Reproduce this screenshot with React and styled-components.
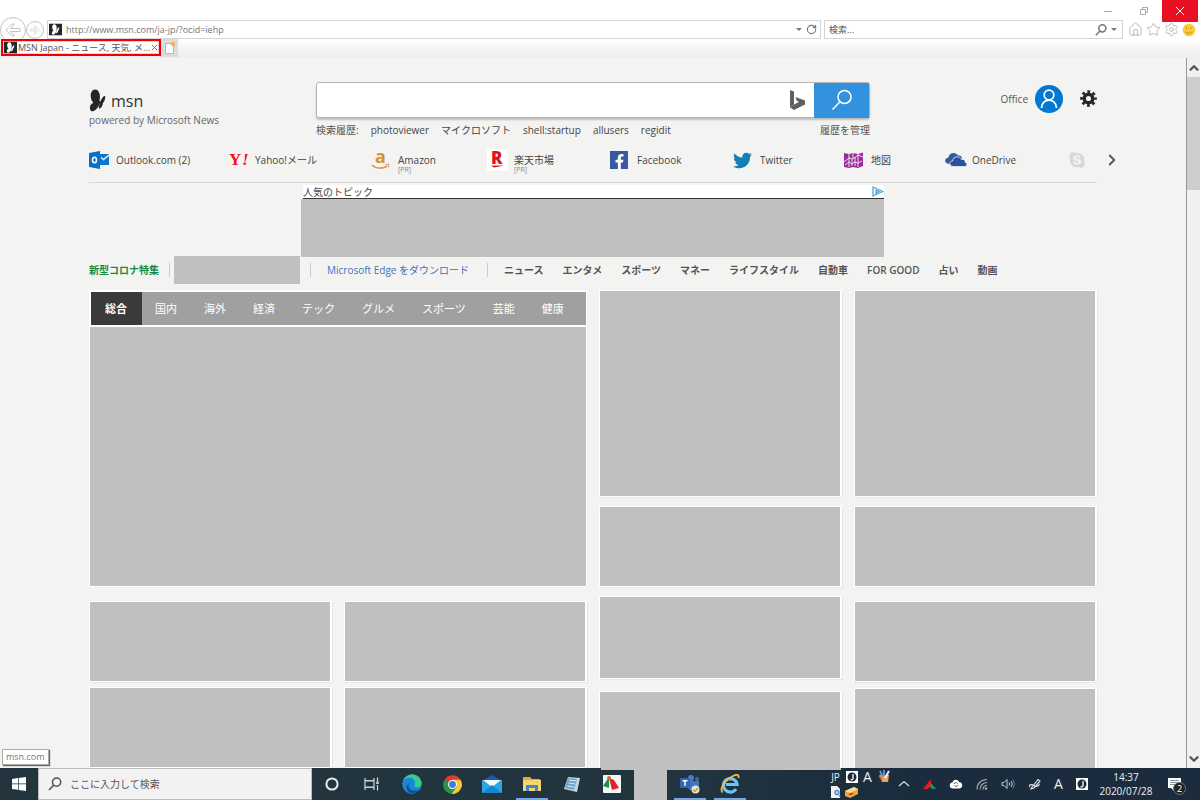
import React from "react"
import styled, { createGlobalStyle } from "styled-components"
import { FaFacebookF, FaTwitter, FaSkype } from "react-icons/fa"
import { Home, Star, Settings, RotateCw, ChevronRight, ChevronUp, ChevronDown } from "lucide-react"

const GRAY = "#c0c0c0"

const QUICK_LINKS = [
  { title: "Outlook.com", extra: "(2)", icon: <OutlookIcon /> },
  { title: "Yahoo!メール", icon: <YahooIcon /> },
  { title: "Amazon", pr: true, icon: <AmazonIcon /> },
  { title: "楽天市場", pr: true, icon: <RakutenIcon /> },
  { title: "Facebook", icon: <FacebookIcon /> },
  { title: "Twitter", icon: <FaTwitter size={19} color="#1180b4" /> },
  { title: "地図", icon: <MapIcon /> },
  { title: "OneDrive", icon: <OneDriveIcon /> },
]

const TOPICS = ["ニュース", "エンタメ", "スポーツ", "マネー", "ライフスタイル", "自動車", "FOR GOOD", "占い", "動画"]

const NEWS_TABS = ["総合", "国内", "海外", "経済", "テック", "グルメ", "スポーツ", "芸能", "健康"]

const HISTORY = ["photoviewer", "マイクロソフト", "shell:startup", "allusers", "regidit"]

export default function App() {
  return (
    <Screen>
      <GlobalStyle />
      <BrowserChrome />
      <Viewport>
        <Page>
          <Content>
            <PageHeader />
            <QuickLinks />
            <Ad>
              <AdTitle>
                人気のトピック
                <AdChoicesIcon />
              </AdTitle>
              <AdBody />
            </Ad>
            <TopicNav />
            <Board />
          </Content>
        </Page>
        <ScrollBar>
          <ScrollButton aria-label="Scroll up">
            <ChevronUp size={14} strokeWidth={4} />
          </ScrollButton>
          <ScrollThumb />
          <ScrollButton aria-label="Scroll down">
            <ChevronDown size={14} strokeWidth={4} />
          </ScrollButton>
        </ScrollBar>
        <StatusTip>msn.com</StatusTip>
      </Viewport>
      <Taskbar />
    </Screen>
  )
}

function BrowserChrome() {
  return (
    <Chrome>
      <TitleBar>
        <WindowButton aria-label="Minimize">
          <svg width="10" height="10" viewBox="0 0 10 10" stroke="#aaa">
            <path d="M1 5.5h8" />
          </svg>
        </WindowButton>
        <WindowButton aria-label="Restore">
          <svg width="10" height="10" viewBox="0 0 10 10" fill="none" stroke="#aaa">
            <path d="M1.5 3.5h5v5h-5zM3.5 3.5v-2h5v5h-2" />
          </svg>
        </WindowButton>
        <WindowButton $close aria-label="Close">
          <svg width="10" height="10" viewBox="0 0 10 10" stroke="#fff">
            <path d="M1 1l8 8M9 1l-8 8" />
          </svg>
        </WindowButton>
      </TitleBar>
      <AddressRow>
        <NavButton $size={26} aria-label="Back">
          <ArrowIcon size={16} />
        </NavButton>
        <NavButton $size={18} aria-label="Forward">
          <ArrowIcon size={10} flip />
        </NavButton>
        <AddressBox>
          <MsnBadge />
          <ChromeInput aria-label="Address" defaultValue="http://www.msn.com/ja-jp/?ocid=iehp" />
          <Caret />
          <IconButton aria-label="Refresh">
            <RotateCw size={11} strokeWidth={2.5} />
          </IconButton>
        </AddressBox>
        <SearchBox>
          <ChromeInput aria-label="Search" placeholder="検索..." />
          <IconButton aria-label="Search the web">
            <GlassIcon size={12} width={1.5} />
          </IconButton>
          <Caret />
        </SearchBox>
        <ChromeTools>
          <Home size={15} strokeWidth={1.5} />
          <Star size={15} strokeWidth={1.5} />
          <Settings size={15} strokeWidth={1.5} />
          <svg width="14" height="14" viewBox="0 0 14 14">
            <circle cx="7" cy="7" r="6.3" fill="#fccb35" />
            <path d="M4.5 4.5v1.5M9 4.5v1.5M3.5 8.5c1.5 2.5 5 2.5 6.5 0" fill="none" stroke="#a9812c" />
          </svg>
        </ChromeTools>
      </AddressRow>
      <TabRow>
        <BrowserTab>
          <MsnBadge />
          <TabTitle>MSN Japan - ニュース, 天気, メ...</TabTitle>
          <IconButton aria-label="Close tab">
            <svg width="7" height="7" viewBox="0 0 7 7" stroke="#777">
              <path d="M1 1l5 5M6 1l-5 5" />
            </svg>
          </IconButton>
        </BrowserTab>
        <NewTab aria-label="New tab">
          <svg width="12" height="14" viewBox="0 0 12 14">
            <path d="M1.5 2.5h8v10h-8z" fill="#fff" stroke="#b5b5b5" />
            <circle cx="9" cy="3" r="2.2" fill="#f3ad4a" />
          </svg>
        </NewTab>
      </TabRow>
    </Chrome>
  )
}

function PageHeader() {
  return (
    <Header>
      <Brand href="#">
        <BrandRow>
          <ButterflyIcon />
          <BrandName>msn</BrandName>
        </BrandRow>
        <BrandNote>powered by Microsoft News</BrandNote>
      </Brand>
      <SearchArea>
        <BingForm>
          <BingInput aria-label="Bing search" />
          <BingIcon />
          <BingButton type="button" aria-label="Search">
            <GlassIcon size={22} width={1.5} />
          </BingButton>
        </BingForm>
        <HistoryRow>
          <span>検索履歴:</span>
          {HISTORY.map((item) => (
            <HistoryLink href="#" key={item}>
              {item}
            </HistoryLink>
          ))}
          <ManageLink href="#">履歴を管理</ManageLink>
        </HistoryRow>
      </SearchArea>
      <Account>
        <span>Office</span>
        <Avatar aria-label="Account">
          <svg width="28" height="28" viewBox="0 0 28 28" fill="none" stroke="#fff" strokeWidth="1.8">
            <circle cx="14" cy="10" r="4.8" />
            <path d="M6.5 23c0-10.5 15-10.5 15 0" />
          </svg>
        </Avatar>
        <IconButton aria-label="Page settings">
          <GearIcon />
        </IconButton>
      </Account>
    </Header>
  )
}

function QuickLinks() {
  return (
    <LinkBar>
      {QUICK_LINKS.map((link) => (
        <QuickLink href="#" key={link.title}>
          <LinkIcon>{link.icon}</LinkIcon>
          <LinkText>
            {link.title} {link.extra}
            {link.pr && <PrNote>[PR]</PrNote>}
          </LinkText>
        </QuickLink>
      ))}
      <FadedLink href="#" aria-label="Skype">
        <FaSkype size={18} />
      </FadedLink>
      <NextButton aria-label="Next links">
        <ChevronRight size={18} strokeWidth={2.5} />
      </NextButton>
    </LinkBar>
  )
}

function TopicNav() {
  return (
    <Topics>
      <Special href="#">新型コロナ特集</Special>
      <Divider />
      <TopicBlock />
      <Divider />
      <EdgeLink href="#">Microsoft Edge をダウンロード</EdgeLink>
      <Divider />
      <TopicList>
        {TOPICS.map((topic) => (
          <TopicLink href="#" key={topic}>
            {topic}
          </TopicLink>
        ))}
      </TopicList>
    </Topics>
  )
}

function Board() {
  return (
    <Columns>
      <MainColumn>
        <TabCard>
          <NewsTabs>
            {NEWS_TABS.map((tab, i) => (
              <NewsTab key={tab} $active={i === 0}>
                {tab}
              </NewsTab>
            ))}
          </NewsTabs>
          <TabBody />
        </TabCard>
        <CardGrid>
          <Card $height={81} />
          <Card $height={81} />
          <Card $height={81} />
          <Card $height={81} />
        </CardGrid>
      </MainColumn>
      <SideColumn>
        <Card $height={207} />
        <Card $height={81} />
        <CardPair $gap={12} $top={0}>
          <Card $height={83} />
          <Card $height={81} />
        </CardPair>
      </SideColumn>
      <SideColumn>
        <Card $height={207} />
        <Card $height={81} />
        <CardPair $gap={6} $top={5}>
          <Card $height={81} />
          <Card $height={81} />
        </CardPair>
      </SideColumn>
    </Columns>
  )
}

function Taskbar() {
  return (
    <Bar>
      <StartButton aria-label="Start">
        <svg width="14" height="14" viewBox="0 0 14 14" fill="#fff">
          <path d="M0 2l6-.9v5.5H0zM6.7 1L14 0v6.6H6.7zM0 7.3h6v5.5l-6-.9zM6.7 7.3H14V14l-7.3-1z" />
        </svg>
      </StartButton>
      <TaskSearch>
        <GlassIcon size={14} width={1.5} />
        <TaskInput aria-label="Windows search" placeholder="ここに入力して検索" />
      </TaskSearch>
      <AppButton aria-label="Cortana">
        <svg width="20" height="20" viewBox="0 0 20 20" fill="none" stroke="#e9e9e9" strokeWidth="2">
          <circle cx="10" cy="10" r="5.6" />
        </svg>
      </AppButton>
      <AppButton aria-label="Task view">
        <svg width="20" height="20" viewBox="0 0 20 20" fill="none" stroke="#cfd4d6" strokeWidth="1.2">
          <path d="M3 4v2.500h9V4M3 16v-2.500h9V16M3 7v6h9V7zM15.500 3.500v4M15.500 11v5.500" />
          <path d="M15.500 7.500v2.500" strokeWidth="2.5" />
        </svg>
      </AppButton>
      <AppButton aria-label="Edge">
        <EdgeIcon />
      </AppButton>
      <AppButton aria-label="Chrome">
        <ChromeIcon />
      </AppButton>
      <AppButton aria-label="Mail">
        <MailIcon />
      </AppButton>
      <AppButton $open aria-label="Explorer">
        <FolderIcon />
      </AppButton>
      <AppButton aria-label="Notepad">
        <NotepadIcon />
      </AppButton>
      <AppButton aria-label="Pinwheel">
        <PinwheelIcon />
      </AppButton>
      <Mask />
      <AppButton $open aria-label="Teams">
        <TeamsIcon />
      </AppButton>
      <AppButton $open aria-label="Internet Explorer">
        <ExplorerIcon />
      </AppButton>
      <Tray>
        <LanguageBar>
          <span>JP</span>
          <ImeIcon />
          <BigLetter>A</BigLetter>
          <PaletteIcon />
          <DocIcon />
          <ToolboxIcon />
        </LanguageBar>
        <TrayIcons>
          <svg width="12" height="12" viewBox="0 0 12 12" fill="none" stroke="#ddd" strokeWidth="1.3">
            <path d="M1 8l5-4.500L11 8" />
          </svg>
          <svg width="13" height="12" viewBox="0 0 13 12">
            <path d="M0 11L8 1v7l-3 3z" fill="#f1141d" />
            <path d="M8 5l5 6H9L7 8.500z" fill="#1c9950" />
          </svg>
          <svg width="14" height="12" viewBox="0 0 14 12">
            <path d="M4 10.500a3 3 0 0 1-.5-6C4 1.500 8.500.5 10 4c4 0 4.500 6 .5 6.500z" fill="#fff" />
            <path d="M5 6a2 2 0 0 1 3.500-.5M9 7a2 2 0 0 1-3.500.5" fill="none" stroke="#555" />
          </svg>
          <svg width="12" height="12" viewBox="0 0 12 12" fill="none" stroke="#aaa" strokeWidth="1.1">
            <path d="M1 11.500C1 5.500 5 1.500 11 1.500M4 11.500c0-4 3-7 7-7M7 11.500c0-2.500 1.500-4 4-4" />
            <circle cx="10" cy="10.5" r=".8" fill="#fff" />
          </svg>
          <svg width="14" height="12" viewBox="0 0 14 12" fill="none" stroke="#ccc">
            <path d="M1 4.500h2l3-3v9l-3-3H1zM8 4.500q1.500 1.500 0 3M10 3q2.500 3 0 6" />
            <path d="M12 1.500q3 4.500 0 9" stroke="#777" />
          </svg>
          <svg width="13" height="13" viewBox="0 0 13 13" fill="none" stroke="#ddd" strokeWidth="1.2">
            <path d="M3 10.500L10 1.500l2 1.500-6 7-3 1zM2 9c-2-3 3-3 5-1 2 1 5-1 4-2" />
          </svg>
          <BigLetter>A</BigLetter>
          <ImeIcon />
        </TrayIcons>
        <Clock>
          <span>14:37</span>
          <span>2020/07/28</span>
        </Clock>
        <NoticeButton aria-label="Notifications">
          <svg width="15" height="15" viewBox="0 0 15 15">
            <path d="M1 1h13v10H7v3l-3-3H1z" fill="#fff" />
            <path d="M3 3.500h9M3 5.500h9M3 7.500h6" stroke="#8a949d" />
          </svg>
          <NoticeCount>2</NoticeCount>
        </NoticeButton>
      </Tray>
    </Bar>
  )
}

/* Icons */

function ArrowIcon({ size, flip }) {
  return (
    <svg width={size} height={size} viewBox="0 0 16 16" fill="none" stroke="#c4c4c4" strokeLinejoin="round">
      <path
        d={flip ? "M15 8L9 2H6.500l4 4.500H1v3h9.500l-4 4.500H9z" : "M1 8l6-6h2.500l-4 4.500H15v3H5.500l4 4.500H7z"}
      />
    </svg>
  )
}

function GlassIcon({ size, width }) {
  return (
    <svg
      width={size}
      height={size}
      viewBox="0 0 22 22"
      fill="none"
      stroke="currentColor"
      strokeWidth={(width * 22) / size}
    >
      <circle cx="13.5" cy="8" r="6.5" />
      <path d="M9 12.800L1.500 20.500" />
    </svg>
  )
}

function ButterflyShape({ fill }) {
  return (
    <g fill={fill}>
      <path d="M6 0c4-.5 6 6 4.500 11 1 1.500.5 3-.5 4.500C8.500 19 5.500 22 3 21.800.5 21.500.5 17 2 15c1-1.300 2.500-1.500 2.500-1.500C1 10.500 0 .5 6 0z" />
      <path d="M16 6.500c.8.500 0 3-.5 4.500-.3 1.200-1 2-1.700 2.500.3 2-1.800 5.500-3.300 5.500-1.500-.2-.2-3.500 0-4.500C11.500 11 14 6 16 6.500z" />
    </g>
  )
}

function ButterflyIcon() {
  return (
    <svg width="17" height="23" viewBox="0 0 17 22">
      <ButterflyShape fill="#262626" />
    </svg>
  )
}

function MsnBadge() {
  return (
    <svg width="13" height="13" viewBox="-5 -1 27 24">
      <rect x="-5" y="-1" width="27" height="24" fill="#262626" />
      <ButterflyShape fill="#fff" />
    </svg>
  )
}

function BingIcon() {
  return (
    <svg width="15" height="20" viewBox="0 0 15 20" fill="#606060">
      <path d="M0 0l4 1.500v13l-4 3z" />
      <path d="M0 17.500l4-3 5-2.500-2.300-1.200L5.500 7 15 10.500v4L4 20z" />
    </svg>
  )
}

function GearIcon() {
  return (
    <svg width="17" height="17" viewBox="0 0 18 18" fill="none" stroke="#262626">
      <circle cx="9" cy="9" r="4.5" strokeWidth="3.6" />
      <circle cx="9" cy="9" r="7.3" strokeWidth="3" strokeDasharray="2.9 2.833" strokeDashoffset="1.45" />
    </svg>
  )
}

function OutlookIcon() {
  return (
    <svg width="20" height="18" viewBox="0 0 20 18">
      <path d="M11 3h9v11h-9z" fill="#0a76cf" />
      <path d="M12 6.500l2.500 2L20 4" fill="none" stroke="#f3f3f2" strokeWidth="1.4" />
      <path d="M0 2l11-2v18L0 16z" fill="#0a70c8" />
      <ellipse cx="5.5" cy="9" rx="2" ry="2.8" fill="none" stroke="#fff" strokeWidth="1.5" />
    </svg>
  )
}

function YahooIcon() {
  return (
    <svg width="21" height="16" viewBox="0 0 21 16">
      <text x="1" y="13" fontFamily="Liberation Serif, serif" fontWeight="700" fontSize="17" fill="#f01020">
        Y
      </text>
      <text
        x="14"
        y="13"
        fontFamily="Liberation Serif, serif"
        fontWeight="700"
        fontStyle="italic"
        fontSize="17"
        fill="#f01020"
      >
        !
      </text>
    </svg>
  )
}

function AmazonIcon() {
  return (
    <svg width="19" height="20" viewBox="0 0 19 20">
      <text x="4" y="13" fontFamily="Open Sans, sans-serif" fontWeight="700" fontSize="18" fill="#d9922b">
        a
      </text>
      <path d="M1 15c4 4 11 4 15 1" fill="none" stroke="#e8935a" strokeWidth="1.6" />
      <path d="M14.500 14.500l3.500-.5-1 3.500" fill="none" stroke="#e8935a" />
    </svg>
  )
}

function RakutenIcon() {
  return (
    <svg width="21" height="22" viewBox="0 0 21 22">
      <rect width="21" height="22" fill="#fff" />
      <text x="4" y="15" fontFamily="Open Sans, sans-serif" fontWeight="800" fontSize="17" fill="#e5101e">
        R
      </text>
      <path d="M4 16.500h13L7 18.500z" fill="#e5101e" />
    </svg>
  )
}

function FacebookIcon() {
  return (
    <FacebookBox>
      <FaFacebookF size={15} />
    </FacebookBox>
  )
}

function MapIcon() {
  return (
    <svg width="19" height="16" viewBox="0 0 19 16">
      <path d="M0 1l5 1 4-1 5 1 5-1.500V14l-5 2-5-1-4 1-5-1z" fill="#992a9c" />
      <path
        d="M5 2v13M14 2v13M0 10l5-4 4 1 5-4 5 2M1 13l4-3 3 2 2-2 4 1 4-2M9 1v5M8 7v7M11 5v9"
        fill="none"
        stroke="#f3f3f2"
        strokeWidth=".9"
      />
    </svg>
  )
}

function OneDriveIcon() {
  return (
    <svg width="22" height="14" viewBox="0 0 22 14">
      <path d="M4 11c-5-.5-5-6-.5-6.500C4-1 11-1.500 13 2.500 17 2 17 5 17 7z" fill="#3557a4" />
      <path
        d="M8 13.500c-4.500-.5-4-5.500-.5-5.500.5-5 7.500-5.500 9-1.500 3-.5 4 1 3.500 2.500 3 1 2 4.500 0 4.500z"
        fill="#2a4f9f"
        stroke="#f3f3f2"
        strokeWidth=".8"
      />
    </svg>
  )
}

function AdChoicesIcon() {
  return (
    <svg width="12" height="11" viewBox="0 0 12 11" fill="none" stroke="#4eaadb" strokeWidth="1.3">
      <path d="M1 1l9.500 4.500L1 10z" />
      <path d="M4 8V4.200l3 1.300-3 1.500" />
    </svg>
  )
}

function EdgeIcon() {
  return (
    <svg width="20" height="20" viewBox="0 0 20 20">
      <circle cx="10" cy="10" r="9.7" fill="#168bd0" />
      <path d="M1 7C4-1.500 17-2 19.500 8c.8 4-2 6-6 5-1.500-.5-1-1.500-.5-2.500C14 7 8 2.500 1 7z" fill="#3ccb8f" />
      <path d="M1 7c3.500-5 11-4 12 1-4-2.500-9 1-7 6 1 3 3 5 6 5.500C5 21-1 15 1 7z" fill="#1d86d6" />
      <path d="M7.500 9c-3 4 1.500 10 10 6.500-3 4-7 4.500-9.500 3.500-4-2-5-8-.5-10z" fill="#194f9c" />
    </svg>
  )
}

function ChromeIcon() {
  return (
    <svg width="19" height="19" viewBox="0 0 20 20">
      <path d="M10 10L1.500 5A10 10 0 0 1 18.500 5z" fill="#e23c32" />
      <path d="M10 10L1.500 5a10 10 0 0 0 7.500 15l5-8z" fill="#27964c" />
      <path d="M10 10l4.500 2L9 20A10 10 0 0 0 18.500 5H10z" fill="#fbc935" />
      <circle cx="10" cy="10" r="4.7" fill="#fff" />
      <circle cx="10" cy="10" r="3.6" fill="#3b7ded" />
    </svg>
  )
}

function MailIcon() {
  return (
    <svg width="20" height="18" viewBox="0 0 20 18">
      <path d="M0 6l10-6 10 6z" fill="#155fa8" />
      <path d="M0 5h20v13H0z" fill="#2ba8e4" />
      <path d="M1 5h18l-9 7z" fill="#f4f8fb" />
      <path d="M0 18l10-8 10 8z" fill="#1585cf" />
    </svg>
  )
}

function FolderIcon() {
  return (
    <svg width="18" height="16" viewBox="0 0 18 16">
      <path d="M0 1h7l2 2h8v12H0z" fill="#e9a83a" />
      <path d="M0 4h18v11H0z" fill="#fbd36b" />
      <path d="M3 15V9h12v6h-3v-3H6v3z" fill="#3b87d8" />
    </svg>
  )
}

function NotepadIcon() {
  return (
    <svg width="18" height="18" viewBox="0 0 18 18">
      <path d="M5 2l12 1-3 14-13-3z" fill="#cdd6dc" />
      <path d="M5 3l9 1-3 11-9-2z" fill="#6da3cd" />
      <path d="M6 5l7 1M5.500 8l6.500 1M4.500 11l6.500 1" stroke="#dce9f2" />
    </svg>
  )
}

function PinwheelIcon() {
  return (
    <svg width="18" height="18" viewBox="0 0 18 18">
      <rect width="18" height="18" rx="1" fill="#f5f5f5" />
      <path d="M6 2L0 11l6 2z" fill="#16944a" />
      <path d="M6 3l5 2 5 8-7 2z" fill="#e3222c" />
      <circle cx="6" cy="3" r="2" fill="#d9672c" />
    </svg>
  )
}

function TeamsIcon() {
  return (
    <svg width="20" height="20" viewBox="0 0 20 20">
      <circle cx="11" cy="4" r="3" fill="#4a7bc8" />
      <circle cx="17" cy="5" r="2" fill="#3d68b4" />
      <path d="M8 7h11v7c-1 4-9 4-11 0z" fill="#4473c2" />
      <rect y="4" width="10" height="10" rx="1" fill="#3563b0" />
      <path d="M2.500 6.700h5M5 6.700v5" stroke="#fff" strokeWidth="1.5" />
      <circle cx="15.5" cy="15.5" r="4" fill="#e8e4d0" />
      <path d="M13 15.500l2 2 3-3.500" fill="none" stroke="#c89a35" strokeWidth="1.3" />
    </svg>
  )
}

function ExplorerIcon() {
  return (
    <svg width="20" height="20" viewBox="0 0 20 20" fill="none">
      <path d="M16 15a6.800 6.800 0 1 1 1-4.500H6" stroke="#6cc6f4" strokeWidth="3.2" />
      <path d="M2.500 18.500C-1 15 6 5 13 2c4-2 6-1.500 5.500 2" stroke="#f5bd3c" strokeWidth="1.8" />
    </svg>
  )
}

function ImeIcon() {
  return (
    <svg width="12" height="12" viewBox="0 0 12 12">
      <rect width="12" height="12" fill="#fff" />
      <circle cx="6" cy="6" r="4.5" fill="#1b2b36" />
      <path d="M7 3v4.500c0 1-1 1.500-2.500 1.500" fill="none" stroke="#fff" strokeWidth="1.3" />
    </svg>
  )
}

function PaletteIcon() {
  return (
    <svg width="12" height="13" viewBox="0 0 12 13">
      <path d="M1 5h10l-1 7H4z" fill="#e9a55c" />
      <path d="M2 1l3 6M6 0v6" stroke="#5f9ad4" strokeWidth="1.8" />
      <path d="M11 1L7 8" stroke="#f0f0f0" strokeWidth="2" />
      <path d="M1 6l3 4" stroke="#d6503e" strokeWidth="1.5" />
    </svg>
  )
}

function DocIcon() {
  return (
    <svg width="10" height="12" viewBox="0 0 10 12">
      <path d="M0 0h6l3 3v9H0z" fill="#f2f2f2" />
      <circle cx="6" cy="6.5" r="2.3" fill="#9cc7ee" stroke="#3a78b5" />
      <path d="M7.500 8.500l2 2.500" stroke="#3a78b5" />
    </svg>
  )
}

function ToolboxIcon() {
  return (
    <svg width="13" height="12" viewBox="0 0 13 12">
      <path d="M0 5l9-4 4 2v5l-8 4-5-2z" fill="#eaa93e" />
      <path d="M0 5l9-4 4 2-8 4z" fill="#fbdc94" />
      <path d="M4 8.500l4-1" stroke="#a33b1e" strokeWidth="1.5" />
    </svg>
  )
}

/* Styles */

const GlobalStyle = createGlobalStyle`
  * {
    box-sizing: border-box;
  }

  body {
    margin: 0;
    color: #555;
    font-family: "Open Sans", "Noto Sans CJK JP", sans-serif;
    font-size: 10px;
    line-height: 14px;
  }

  button, input {
    font: inherit;
    color: inherit;
    padding: 0;
    border: 0;
    background: none;
  }

  input {
    outline: none;
    min-width: 0;
  }

  a {
    color: inherit;
    text-decoration: none;
  }

  svg {
    display: block;
    flex-shrink: 0;
    overflow: visible;
  }
`

const Screen = styled.div`
  display: flex;
  flex-direction: column;
  height: 100vh;
  overflow: hidden;
`

const Chrome = styled.header`
  background: #fff;
`

const TitleBar = styled.div`
  display: flex;
  justify-content: flex-end;
  height: 20px;
  padding-right: 2px;
`

const WindowButton = styled.button`
  display: flex;
  align-items: center;
  justify-content: center;
  width: 36px;
  height: 22px;
  background: ${(props) => (props.$close ? "#e81123" : "none")};
`

const AddressRow = styled.div`
  display: flex;
  align-items: center;
  height: 19px;
  padding-right: 4px;
`

const NavButton = styled.button`
  display: flex;
  flex-shrink: 0;
  align-items: center;
  justify-content: center;
  width: ${(props) => props.$size}px;
  height: ${(props) => props.$size}px;
  border: 1px solid #c4c4c4;
  border-radius: 50%;
  background: #fff;
`

const AddressBox = styled.div`
  display: flex;
  flex: 1;
  align-items: center;
  gap: 4px;
  height: 19px;
  margin-left: 3px;
  padding: 0 3px 0 1px;
  border: 1px solid #d5d5d5;
  color: #777;
`

const SearchBox = styled(AddressBox)`
  flex: 0 1 299px;
  padding: 0 5px 0 4px;
`

const ChromeInput = styled.input`
  flex: 1;
  font-size: 9px;

  &::placeholder {
    color: #555;
    opacity: 1;
  }
`

const Caret = styled.span`
  border: 3px solid transparent;
  border-top-color: #777;
  border-bottom: 0;
`

const IconButton = styled.button`
  display: flex;
  align-items: center;
`

const ChromeTools = styled.div`
  display: flex;
  align-items: center;
  gap: 3px;
  margin-left: 5px;
  color: #b5b5b5;
`

const TabRow = styled.div`
  display: flex;
  height: 19px;
  padding: 0 0 1px 1px;
  background: linear-gradient(#fff, #f6f6f6 40%, #ededed);
`

const BrowserTab = styled.div`
  display: flex;
  align-items: center;
  gap: 1px;
  width: 160px;
  height: 17px;
  padding: 0 1px;
  border: 2px solid #f00006;
  background: #fff;
  box-shadow: inset 0 0 0 1px #ffc8c8;
`

const TabTitle = styled.span`
  flex: 1;
  font-size: 9px;
  white-space: nowrap;
`

const NewTab = styled.button`
  display: flex;
  align-items: center;
  justify-content: center;
  width: 17px;
  background: #dcdcdc;
`

const Viewport = styled.div`
  position: relative;
  display: flex;
  flex: 1;
  min-height: 0;
`

const Page = styled.main`
  flex: 1;
  overflow: hidden;
  background: #f3f3f2;
`

const Content = styled.div`
  max-width: 1008px;
  margin: 0 auto;
`

const Header = styled.div`
  display: grid;
  grid-template-columns: 227fr 554fr 227fr;
  height: 87px;
  padding-top: 24px;
`

const Brand = styled.a`
  padding-top: 6px;
`

const BrandRow = styled.span`
  display: flex;
  align-items: center;
  gap: 5px;
  height: 25px;
`

const BrandName = styled.span`
  color: #333;
  font-size: 16px;
`

const BrandNote = styled.span`
  color: #666;
`

const SearchArea = styled.div`
  min-width: 0;
`

const BingForm = styled.form`
  display: flex;
  align-items: center;
  height: 36px;
  border: 1px solid #b5b5b5;
  border-radius: 3px;
  background: #fff;
  box-shadow: 0 2px 2px #bdbdbd;
`

const BingInput = styled.input`
  flex: 1;
  height: 30px;
  padding-left: 8px;
`

const BingButton = styled.button`
  display: flex;
  align-items: center;
  justify-content: center;
  width: 55px;
  height: 35px;
  margin-left: 9px;
  color: #fff;
  background: #3392e0;
`

const HistoryRow = styled.div`
  display: flex;
  gap: 12px;
  margin-top: 5px;
`

const HistoryLink = styled.a`
  color: #444;
`

const ManageLink = styled.a`
  margin-left: auto;
`

const Account = styled.div`
  display: flex;
  align-items: center;
  justify-content: flex-end;
  gap: 7px;
  height: 33px;

  button:last-child {
    margin-left: 10px;
  }
`

const Avatar = styled.button`
  width: 28px;
  height: 28px;
  border-radius: 50%;
  background: #0078d4;
`

const LinkBar = styled.nav`
  position: relative;
  display: grid;
  grid-template-columns: 139fr 143fr 116fr 123fr 123fr 111fr 101fr 123fr 29fr;
  height: 38px;
  margin-bottom: 2px;
  border-bottom: 1px solid #d8d8d8;
`

const QuickLink = styled.a`
  display: flex;
  align-items: center;
  height: 30px;
`

const LinkIcon = styled.span`
  display: flex;
  align-items: center;
  width: 27px;
`

const LinkText = styled.span`
  position: relative;
  color: #444;
  white-space: nowrap;
`

const PrNote = styled.small`
  position: absolute;
  top: 12px;
  left: 0;
  color: #888;
  font-size: 7px;
  line-height: 9px;
`

const FacebookBox = styled.span`
  display: flex;
  align-items: flex-end;
  justify-content: flex-end;
  width: 18px;
  height: 18px;
  padding-right: 1px;
  color: #fff;
  background: #3858a0;
`

const FadedLink = styled(QuickLink)`
  color: #d5d8da;
`

const NextButton = styled.button`
  position: absolute;
  top: 6px;
  right: -24px;
`

const Ad = styled.section`
  width: 583px;
  margin-left: 212px;
`

const AdTitle = styled.div`
  display: flex;
  align-items: center;
  justify-content: space-between;
  height: 14px;
  margin-left: 2px;
  border-bottom: 1px solid #333;
  color: #444;
  background: #fff;
`

const AdBody = styled.div`
  height: 58px;
  background: ${GRAY};
`

const Topics = styled.nav`
  display: flex;
  align-items: center;
  height: 26px;
  white-space: nowrap;
`

const Special = styled.a`
  color: #188a3c;
  font-weight: 700;
`

const Divider = styled.span`
  width: 1px;
  height: 14px;
  margin: 0 4px 0 10px;
  background: #ccc;
`

const TopicBlock = styled.span`
  width: 126px;
  height: 28px;
  background: ${GRAY};
`

const EdgeLink = styled.a`
  margin: 0 8px 0 12px;
  color: #3b74b9;
`

const TopicList = styled.div`
  display: flex;
  gap: 19px;
  margin-left: 12px;
`

const TopicLink = styled.a`
  font-weight: 600;
`

const Columns = styled.div`
  display: grid;
  grid-template-columns: 498fr 243fr 243fr;
  align-items: start;
  gap: 12px;
  margin-top: 7px;
`

const MainColumn = styled.div`
  display: grid;
  gap: 14px;
`

const SideColumn = styled.div`
  display: grid;
  gap: 9px;
`

const TabCard = styled.section`
  padding: 2px 1px 1px;
  background: #fff;
`

const NewsTabs = styled.div`
  display: flex;
  height: 33px;
  margin: 0 0 2px 1px;
  background: #a0a0a0;
`

const NewsTab = styled.button`
  padding: ${(props) => (props.$active ? "0 15px 0 14px" : "0 14px 0 13px")};
  color: #fff;
  font-size: 11px;
  font-weight: ${(props) => (props.$active ? 700 : 400)};
  background: ${(props) => (props.$active ? "#3a3a3a" : "none")};
`

const TabBody = styled.div`
  height: 259px;
  background: ${GRAY};
`

const CardGrid = styled.div`
  display: grid;
  grid-template-columns: 1fr 1fr;
  gap: 5px 12px;
`

const Card = styled.section`
  height: ${(props) => props.$height}px;
  border: 1px solid #fff;
  border-right-width: 2px;
  background: ${GRAY};
  box-shadow: 1px 1px 0 #e6e6e6;
`

const CardPair = styled.div`
  display: grid;
  gap: ${(props) => props.$gap}px;
  margin-top: ${(props) => props.$top}px;
`

const ScrollBar = styled.div`
  display: flex;
  flex-direction: column;
  width: 14px;
  border-left: 1px solid #999;
  background: #f0f0f0;
`

const ScrollButton = styled.button`
  display: flex;
  align-items: center;
  justify-content: center;
  height: 19px;

  &:last-child {
    margin-top: auto;
  }
`

const ScrollThumb = styled.div`
  height: 113px;
  background: #cdcdcd;
`

const StatusTip = styled.div`
  position: absolute;
  bottom: 3px;
  left: 2px;
  padding: 0 3px;
  border: 1px solid #aaa;
  color: #777;
  font-size: 9px;
  background: #fff;
  box-shadow: 1px 1px 1px #666;
`

const Bar = styled.footer`
  display: flex;
  height: 32px;
  color: #eee;
  background: linear-gradient(90deg, #22353f 55%, #1b2c3e 75%);
`

const StartButton = styled.button`
  display: flex;
  align-items: center;
  justify-content: center;
  width: 38px;
`

const TaskSearch = styled.div`
  display: flex;
  align-items: center;
  gap: 8px;
  width: 274px;
  padding-left: 9px;
  border: 1px solid #bbb;
  color: #555;
  background: #f2f2f2;
`

const TaskInput = styled.input`
  flex: 1;

  &::placeholder {
    color: #555;
    opacity: 1;
  }
`

const AppButton = styled.button`
  position: relative;
  display: flex;
  align-items: center;
  justify-content: center;
  width: 40px;

  &::after {
    content: "";
    position: absolute;
    bottom: 0;
    left: 4px;
    width: 32px;
    height: 2px;
    background: ${(props) => (props.$open ? "#76a5e8" : "none")};
  }
`

/* Grey block over the bar, with a thin strip that reaches out on both sides */
const Mask = styled.div`
  position: relative;
  width: 33px;
  margin: 0 3px 0 2px;
  background: ${GRAY};

  &::before {
    content: "";
    position: absolute;
    top: 0;
    left: -33px;
    width: 240px;
    height: 2px;
    background: ${GRAY};
  }
`

const Tray = styled.div`
  display: flex;
  align-items: center;
  margin-left: auto;
`

const LanguageBar = styled.div`
  display: grid;
  grid-template-columns: 13px 13px 13px 13px;
  align-items: center;
  justify-items: center;
  gap: 3px;
  line-height: 12px;
`

const BigLetter = styled.span`
  font-size: 14px;
  line-height: 12px;
`

const TrayIcons = styled.div`
  display: flex;
  align-items: center;
  justify-content: space-between;
  width: 190px;
  margin-left: 8px;
`

const Clock = styled.time`
  display: flex;
  flex-direction: column;
  align-items: center;
  width: 54px;
  margin-left: 11px;
`

const NoticeButton = styled.button`
  position: relative;
  margin: 0 18px 0 14px;
`

const NoticeCount = styled.span`
  position: absolute;
  top: 5px;
  left: 6px;
  width: 13px;
  height: 13px;
  border: 1px solid #777;
  border-radius: 50%;
  color: #fff;
  font-size: 9px;
  line-height: 11px;
  background: #222;
`
